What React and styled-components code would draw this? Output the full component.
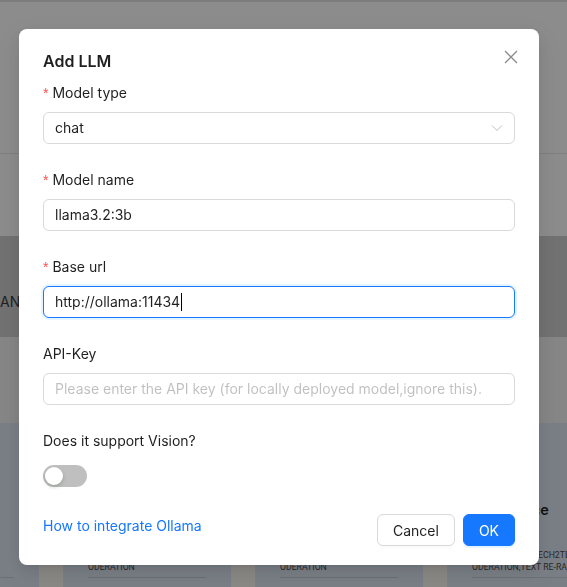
import React from "react";
import styled, { createGlobalStyle } from "styled-components";

const Global = createGlobalStyle`
  html, body { margin: 0; padding: 0; }
  body {
    width: 567px; height: 587px; overflow: hidden;
    font-family: Inter, Roboto, "Noto Sans", "Liberation Sans", sans-serif;
    background: #fff;
  }
  * { box-sizing: border-box; }
`;

/* ---------- background page ---------- */
const Page = styled.div`
  width: 567px; height: 587px; overflow: hidden;
  display: flex; flex-direction: column; background: #fff;
`;
const TopEdge = styled.div` height: 2px; background: #e2e2e2; flex: none; `;
const HeaderArea = styled.div`
  height: 152px; flex: none; border-bottom: 1px solid #e9e9e9;
`;
const Spacer = styled.div`
  height: ${p => p.$h}px; flex: none; background: ${p => p.$bg || "#fff"};
`;
const Band = styled.div`
  height: 101px; flex: none; background: #d0d0d0;
  display: flex; align-items: center;
  font-size: 14px; color: #3a3a3a; padding-top: 30px;
`;
const CardRow = styled.div`
  flex: 1; display: flex; gap: 24px; margin-left: -129px;
  background: #fdf9f3;
`;
const Card = styled.div`
  width: 168px; flex: none; background: #dfe7f4;
  padding: 24px 25px 0;
  display: flex; flex-direction: column;
`;
const Logo = styled.div` height: 40px; margin-bottom: 11px; `;
const CardTitle = styled.div`
  font-size: 14.5px; font-weight: 600; line-height: 24px; color: #1f1f1f;
  white-space: nowrap; margin-bottom: 15px;
`;
const Tags = styled.div`
  font-family: Roboto, "Liberation Sans", sans-serif;
  font-size: 8.7px; line-height: 12px; color: #4a4a4a; text-transform: uppercase;
  white-space: nowrap; padding-bottom: 4px; border-bottom: 1px solid #c6ccd6;
`;
const TagLine = styled.div``;

/* ---------- modal ---------- */
const Mask = styled.div`
  position: fixed; inset: 0; background: rgba(0, 0, 0, 0.45);
`;
const Wrap = styled.div`
  position: fixed; inset: 0; padding: 29px 0 0 19px;
`;
const Modal = styled.div`
  position: relative; width: 520px; background: #fff; border-radius: 8px;
  padding: 20px 24px 19px;
  box-shadow: 0 6px 16px 0 rgba(0,0,0,0.08), 0 3px 6px -4px rgba(0,0,0,0.12), 0 9px 28px 8px rgba(0,0,0,0.05);
  color: rgba(0, 0, 0, 0.88); font-size: 14px;
`;
const Title = styled.div`
  font-size: 16px; font-weight: 600; line-height: 24px; margin-bottom: 9px;
`;
const Close = styled.button`
  position: absolute; top: 17px; right: 17px; width: 22px; height: 22px;
  border: 0; background: transparent; padding: 0; cursor: pointer;
  display: flex; align-items: center; justify-content: center;
  color: rgba(0, 0, 0, 0.45);
`;
const Item = styled.div`
  margin-bottom: ${p => (p.$last ? 22 : 25)}px;
`;
const Label = styled.div`
  height: 30px; line-height: 22px; padding-bottom: 8px; font-size: 14px;
`;
const Req = styled.span`
  color: #ff4d4f; margin-right: 4px; font-family: "Liberation Sans", sans-serif;
  font-size: 14px; line-height: 0;
`;
const Field = styled.div`
  height: 32px; border-radius: 6px; padding: 0 11px;
  display: flex; align-items: center; justify-content: space-between;
  border: 1px solid ${p => (p.$focused ? "#1677ff" : "#d9d9d9")};
  box-shadow: ${p => (p.$focused ? "0 0 0 2px rgba(5,145,255,0.1)" : "none")};
  font-size: 14px; line-height: 22px;
  color: ${p => (p.$placeholder ? "rgba(0,0,0,0.25)" : "rgba(0,0,0,0.88)")};
  white-space: nowrap; overflow: hidden;
`;
const Caret = styled.span`
  display: inline-block; width: 1px; height: 18px; background: #000;
  vertical-align: -4px; margin-left: 1px;
`;
const Control = styled.div`
  min-height: 32px; display: flex; align-items: center;
`;
const Switch = styled.div`
  width: 44px; height: 22px; border-radius: 11px; background: rgba(0,0,0,0.25);
  padding: 2px;
`;
const Knob = styled.div`
  width: 18px; height: 18px; border-radius: 50%; background: #fff;
  box-shadow: 0 2px 4px 0 rgba(0, 35, 11, 0.2);
`;
const Footer = styled.div`
  display: flex; justify-content: space-between; align-items: flex-start;
`;
const Link = styled.a`
  color: #1677ff; text-decoration: none; line-height: 22px; font-size: 14px;
  margin-top: 1px;
`;
const Buttons = styled.div` display: flex; gap: 8px; `;
const Button = styled.button`
  height: 32px; padding: 0 15px; border-radius: 6px; font-size: 14px;
  font-family: inherit; cursor: pointer;
  border: 1px solid ${p => (p.$primary ? "#1677ff" : "#d9d9d9")};
  background: ${p => (p.$primary ? "#1677ff" : "#fff")};
  color: ${p => (p.$primary ? "#fff" : "rgba(0,0,0,0.88)")};
  box-shadow: ${p => (p.$primary ? "0 2px 0 rgba(5,145,255,0.1)" : "0 2px 0 rgba(0,0,0,0.02)")};
`;

const Chevron = () => (
  <svg width="12" height="12" viewBox="0 0 12 12" fill="none">
    <path d="M1 3.5 L6 8.5 L11 3.5" stroke="rgba(0,0,0,0.25)" strokeWidth="1" />
  </svg>
);
const XIcon = () => (
  <svg width="14" height="14" viewBox="0 0 14 14" fill="none">
    <path d="M1 1 L13 13 M13 1 L1 13" stroke="currentColor" strokeWidth="1.3" />
  </svg>
);

const cards = [
  { title: "OpenAI", tags: ["LLM,TEXT EMBEDDING,", "SPEECH2TEXT,M", "ODERATION"] },
  { title: "Ollama", tags: ["LLM,TEXT EMBEDDING,", "SPEECH2TEXT,M", "ODERATION"] },
  { title: "Tongyi", tags: ["LLM,TEXT EMBEDDING,", "SPEECH2TEXT,M", "ODERATION"] },
  { title: "Xinference", tags: ["LLM,TEXT", "EMBEDDING,SPEECH2TEXT,M", "ODERATION,TEXT RE-RANK"] },
];

export default function App() {
  return (
    <>
      <Global />
      <Page>
        <TopEdge />
        <HeaderArea />
        <Spacer $h={82} />
        <Band>AN</Band>
        <Spacer $h={86} $bg="#f4f4f4" />
        <CardRow>
          {cards.map(c => (
            <Card key={c.title}>
              <Logo />
              <CardTitle>{c.title}</CardTitle>
              <Tags>
                {c.tags.map(t => <TagLine key={t}>{t}</TagLine>)}
              </Tags>
            </Card>
          ))}
        </CardRow>
      </Page>
      <Mask />
      <Wrap>
        <Modal>
          <Close aria-label="Close"><XIcon /></Close>
          <Title>Add LLM</Title>
          <Item>
            <Label><Req>*</Req>Model type</Label>
            <Field>chat<Chevron /></Field>
          </Item>
          <Item>
            <Label><Req>*</Req>Model name</Label>
            <Field>llama3.2:3b</Field>
          </Item>
          <Item>
            <Label><Req>*</Req>Base url</Label>
            <Field $focused><span>http://ollama:11434<Caret /></span></Field>
          </Item>
          <Item>
            <Label>API-Key</Label>
            <Field $placeholder>Please enter the API key (for locally deployed model,ignore this).</Field>
          </Item>
          <Item $last>
            <Label>Does it support Vision?</Label>
            <Control><Switch><Knob /></Switch></Control>
          </Item>
          <Footer>
            <Link href="#">How to integrate Ollama</Link>
            <Buttons>
              <Button>Cancel</Button>
              <Button $primary>OK</Button>
            </Buttons>
          </Footer>
        </Modal>
      </Wrap>
    </>
  );
}
